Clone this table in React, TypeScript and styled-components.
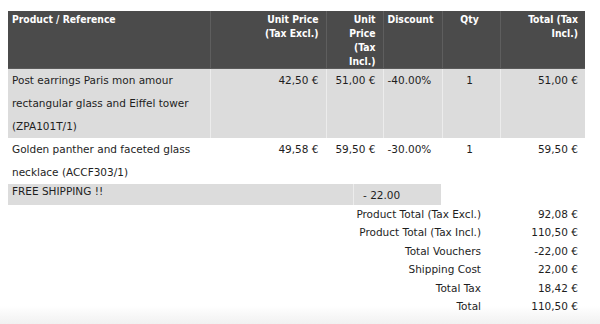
import React from "react";
import styled, { createGlobalStyle } from "styled-components";

const Global = createGlobalStyle`
  html {
    min-height: 324px;
    background: linear-gradient(to bottom, #ffffff 0px, #ffffff 306px, #f1f1f1 324px);
  }
  body {
    margin: 8px;
    font-family: "DejaVu Sans", Verdana, sans-serif;
    font-size: 10.5px;
    color: #1e1e1e;
  }
`;

const Wrap = styled.div`
  width: 577px;
  padding-top: 3px;
`;

const Table = styled.table`
  width: 577px;
  border-collapse: collapse;
  table-layout: fixed;
`;

const Th = styled.th<{ $align?: string }>`
  background: #4b4b4b;
  color: #ffffff;
  font-family: "DejaVu Sans Condensed", "DejaVu Sans", Verdana, sans-serif;
  font-size: 10.3px;
  font-weight: bold;
  line-height: 14px;
  padding: 1px 7px 0 4px;
  vertical-align: top;
  text-align: ${(p) => p.$align || "left"};
  border-left: 1px solid #5e5e5e;
  border-bottom: 1px solid #5a5a5a;
  &:first-child {
    border-left: none;
  }
`;

const Tr = styled.tr<{ $shade?: boolean }>`
  background: ${(p) => (p.$shade ? "#dcdcdc" : "#ffffff")};
`;

const Td = styled.td<{ $align?: string }>`
  line-height: 23px;
  padding: 0 7px 0 4px;
  vertical-align: top;
  text-align: ${(p) => p.$align || "left"};
  border-left: 1px solid rgba(255, 255, 255, 0.45);
  &:first-child {
    border-left: none;
  }
`;

const Voucher = styled.div`
  width: 433px;
  height: 21px;
  display: grid;
  grid-template-columns: 345px 88px;
  background: #dcdcdc;
`;

const VoucherName = styled.div`
  padding-left: 4px;
  line-height: 14px;
  align-self: start;
`;

const VoucherValue = styled.div`
  padding-left: 9px;
  display: flex;
  align-items: center;
  border-left: 1px solid rgba(255, 255, 255, 0.45);
`;

const Totals = styled.div`
  display: grid;
  grid-template-columns: 482px 95px;
  line-height: 18.4px;
`;

const TLabel = styled.div`
  text-align: right;
  padding-right: 9px;
`;

const TValue = styled.div`
  text-align: right;
  padding-right: 7px;
`;

const widths = [202, 116, 57, 59, 58, 85];

const products = [
  {
    name: "Post earrings Paris mon amour rectangular glass and Eiffel tower (ZPA101T/1)",
    ex: "42,50 €",
    inc: "51,00 €",
    disc: "-40.00%",
    qty: "1",
    total: "51,00 €",
  },
  {
    name: "Golden panther and faceted glass necklace (ACCF303/1)",
    ex: "49,58 €",
    inc: "59,50 €",
    disc: "-30.00%",
    qty: "1",
    total: "59,50 €",
  },
];

const totals: [string, string][] = [
  ["Product Total (Tax Excl.)", "92,08 €"],
  ["Product Total (Tax Incl.)", "110,50 €"],
  ["Total Vouchers", "-22,00 €"],
  ["Shipping Cost", "22,00 €"],
  ["Total Tax", "18,42 €"],
  ["Total", "110,50 €"],
];

export default function App() {
  return (
    <>
      <Global />
      <Wrap>
        <Table>
          <colgroup>
            {widths.map((w, i) => (
              <col key={i} style={{ width: w }} />
            ))}
          </colgroup>
          <thead>
            <tr>
              <Th>Product / Reference</Th>
              <Th $align="right">
                Unit Price
                <br />
                (Tax Excl.)
              </Th>
              <Th $align="right">
                Unit Price
                <br />
                (Tax Incl.)
              </Th>
              <Th>Discount</Th>
              <Th $align="center">Qty</Th>
              <Th $align="right">
                Total (Tax
                <br />
                Incl.)
              </Th>
            </tr>
          </thead>
          <tbody>
            {products.map((p, i) => (
              <Tr key={i} $shade={i % 2 === 0}>
                <Td>{p.name}</Td>
                <Td $align="right">{p.ex}</Td>
                <Td $align="right">{p.inc}</Td>
                <Td>{p.disc}</Td>
                <Td $align="center">{p.qty}</Td>
                <Td $align="right">{p.total}</Td>
              </Tr>
            ))}
          </tbody>
        </Table>
        <Voucher>
          <VoucherName>FREE SHIPPING !!</VoucherName>
          <VoucherValue>- 22.00</VoucherValue>
        </Voucher>
        <Totals>
          {totals.map(([l, v]) => (
            <React.Fragment key={l}>
              <TLabel>{l}</TLabel>
              <TValue>{v}</TValue>
            </React.Fragment>
          ))}
        </Totals>
      </Wrap>
    </>
  );
}
